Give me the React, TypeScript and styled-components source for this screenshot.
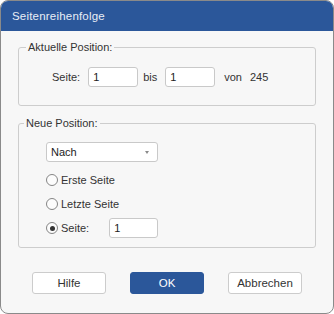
import React from "react";
import styled, { createGlobalStyle } from "styled-components";

const Global = createGlobalStyle`
  html, body { margin: 0; padding: 0; background: #ffffff; }
  * { box-sizing: border-box; }
`;

const Window = styled.div`
  width: 334px;
  height: 314px;
  border: 1px solid #8a8a8a;
  border-radius: 8px;
  overflow: hidden;
  background: #f7f7f7;
  display: flex;
  flex-direction: column;
  font-family: "Liberation Sans", Arial, sans-serif;
  font-size: 11px;
  color: #333333;
`;

const TitleBar = styled.div`
  height: 30px;
  flex: none;
  background: #2b579a;
  color: #e9eef6;
  display: flex;
  align-items: center;
  padding-left: 11px;
  font-size: 11.5px;
  letter-spacing: 0.2px;
`;

const Body = styled.div`
  display: flex;
  flex-direction: column;
  padding: 9px 17px 0 17px;
`;

const Group = styled.fieldset<{ $mt?: number }>`
  margin: ${(p) => p.$mt ?? 0}px 0 0 0;
  border: 1px solid #cdcdcd;
  border-radius: 3px;
  padding: 0;
  min-inline-size: 0;
`;

const Legend = styled.legend<{ $ml: number }>`
  margin-left: ${(p) => p.$ml}px;
  padding: 0 2px;
  font-size: 11px;
  line-height: 14px;
  color: #333333;
`;

const GroupContent = styled.div<{ $pt: number; $pb: number; $pl: number }>`
  padding: ${(p) => p.$pt}px 10px ${(p) => p.$pb}px ${(p) => p.$pl}px;
`;

const Row = styled.div`
  display: flex;
  align-items: center;
  height: 20px;
`;

const Label = styled.span<{ $ml?: number; $mr?: number }>`
  margin-left: ${(p) => p.$ml ?? 0}px;
  margin-right: ${(p) => p.$mr ?? 0}px;
  font-size: 11px;
  white-space: nowrap;
`;

const TextBox = styled.div<{ $w: number }>`
  width: ${(p) => p.$w}px;
  height: 20px;
  background: #ffffff;
  border: 1px solid #c9c9c9;
  border-radius: 3px;
  display: flex;
  align-items: center;
  padding-left: 4px;
  font-size: 11px;
  color: #222;
`;

const Select = styled.div`
  width: 112px;
  height: 20px;
  background: #ffffff;
  border: 1px solid #c9c9c9;
  border-radius: 3px;
  display: flex;
  align-items: center;
  justify-content: space-between;
  padding: 0 8px 0 4px;
  font-size: 11px;
  color: #222;
  margin-bottom: 8px;
`;

const Arrow = styled.span`
  width: 0;
  height: 0;
  border-left: 2.5px solid transparent;
  border-right: 2.5px solid transparent;
  border-top: 3px solid #8a8a8a;
`;

const Stack = styled.div`
  display: flex;
  flex-direction: column;
  align-items: flex-start;
  gap: 4px;
`;

const RadioCircle = styled.span<{ $on?: boolean }>`
  width: 12px;
  height: 12px;
  border-radius: 50%;
  border: 1px solid #858585;
  background: #fcfcfc;
  margin-right: 3px;
  display: flex;
  align-items: center;
  justify-content: center;
  flex: none;
  &::after {
    content: "";
    width: 5px;
    height: 5px;
    border-radius: 50%;
    background: ${(p) => (p.$on ? "#333333" : "transparent")};
  }
`;

const Buttons = styled.div`
  display: flex;
  justify-content: center;
  gap: 24px;
  margin-top: 24px;
`;

const Button = styled.div<{ $primary?: boolean }>`
  width: 74px;
  height: 22px;
  border-radius: 3px;
  border: 1px solid ${(p) => (p.$primary ? "#2b579a" : "#cccccc")};
  background: ${(p) => (p.$primary ? "#2b579a" : "#ffffff")};
  color: ${(p) => (p.$primary ? "#ffffff" : "#333333")};
  display: flex;
  align-items: center;
  justify-content: center;
  font-size: 11.5px;
`;

export default function App() {
  return (
    <>
      <Global />
      <Window>
        <TitleBar>Seitenreihenfolge</TitleBar>
        <Body>
          <Group>
            <Legend $ml={7}>Aktuelle Position:</Legend>
            <GroupContent $pt={13} $pb={18} $pl={33}>
              <Row>
                <Label $mr={8}>Seite:</Label>
                <TextBox $w={50}>1</TextBox>
                <Label $ml={5} $mr={8}>bis</Label>
                <TextBox $w={50}>1</TextBox>
                <Label $ml={9} $mr={8}>von</Label>
                <Label>245</Label>
              </Row>
            </GroupContent>
          </Group>
          <Group $mt={10}>
            <Legend $ml={5}>Neue Position:</Legend>
            <GroupContent $pt={12} $pb={9} $pl={27}>
              <Select>
                <span>Nach</span>
                <Arrow />
              </Select>
              <Stack>
                <Row>
                  <RadioCircle />
                  <Label>Erste Seite</Label>
                </Row>
                <Row>
                  <RadioCircle />
                  <Label>Letzte Seite</Label>
                </Row>
                <Row>
                  <RadioCircle $on />
                  <Label $mr={20}>Seite:</Label>
                  <TextBox $w={49}>1</TextBox>
                </Row>
              </Stack>
            </GroupContent>
          </Group>
          <Buttons>
            <Button>Hilfe</Button>
            <Button $primary>OK</Button>
            <Button>Abbrechen</Button>
          </Buttons>
        </Body>
      </Window>
    </>
  );
}
